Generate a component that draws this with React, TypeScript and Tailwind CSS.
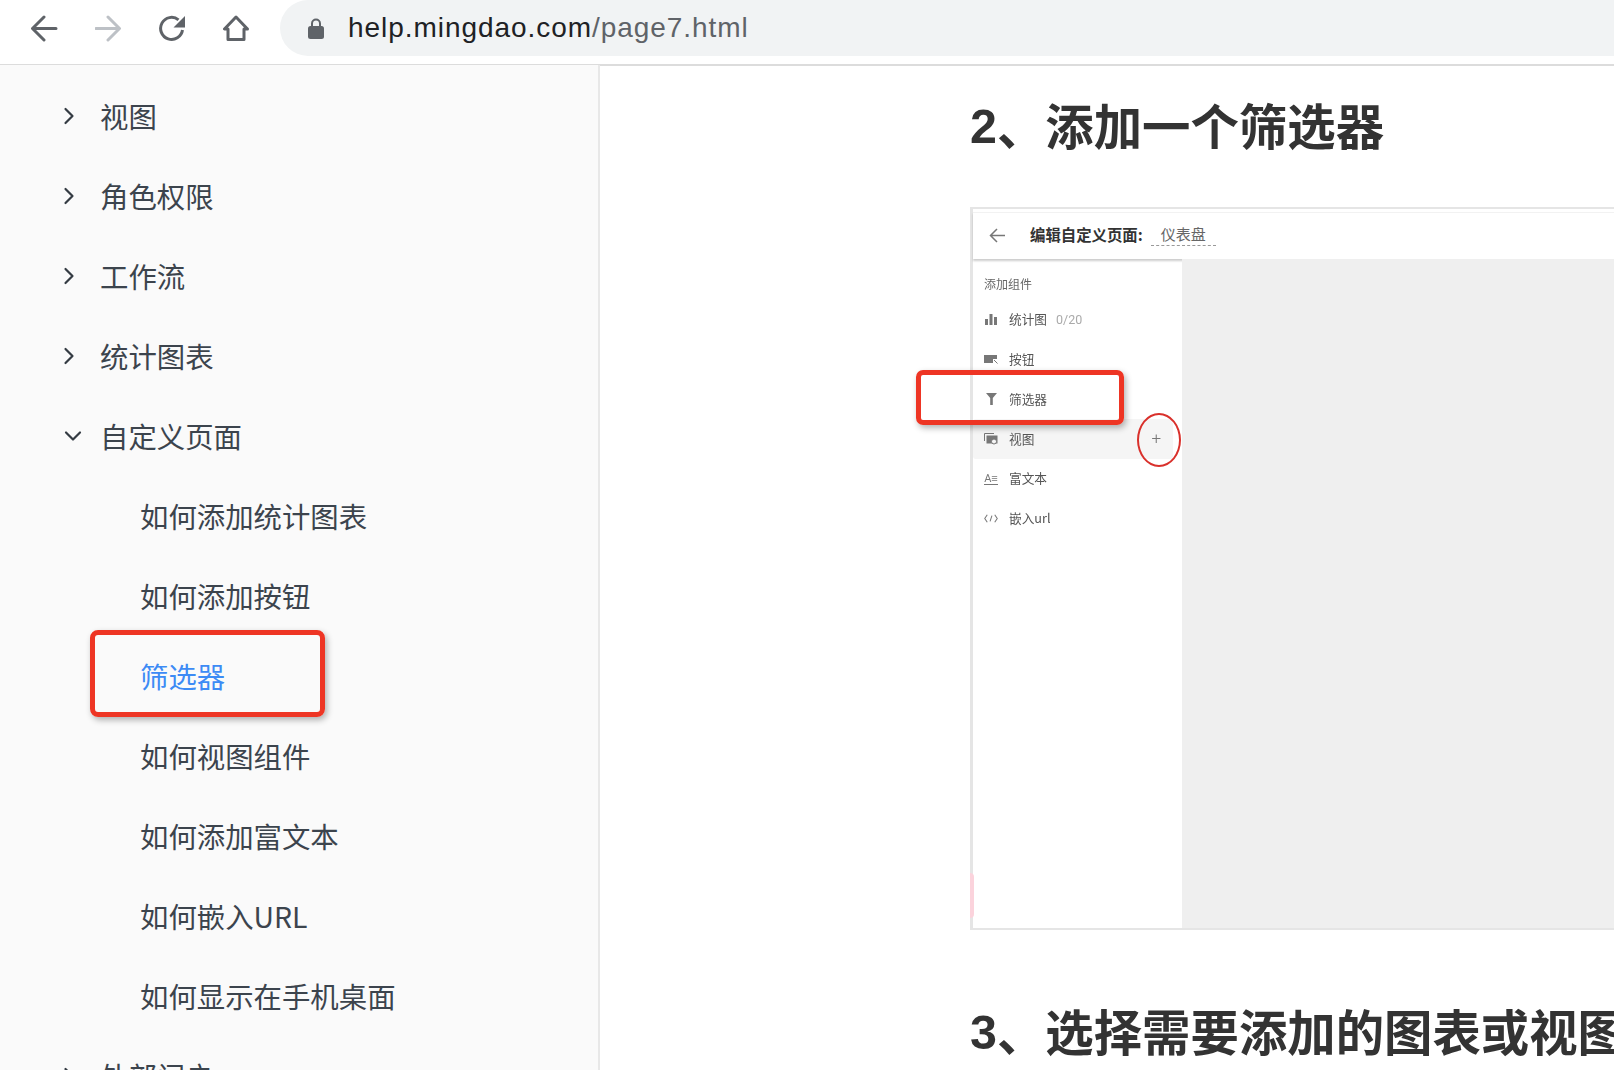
import React from "react";

const CJK = "font-['Noto_Sans_CJK_SC','Noto_Sans',sans-serif]";

function ChevronRight() {
  return (
    <svg width="12" height="18" viewBox="0 0 12 18" fill="none" stroke="#343b43" strokeWidth="2.2" strokeLinecap="round" strokeLinejoin="round">
      <path d="M2.5 2 L9.5 9 L2.5 16" />
    </svg>
  );
}

function ChevronDown() {
  return (
    <svg width="18" height="12" viewBox="0 0 18 12" fill="none" stroke="#343b43" strokeWidth="2.2" strokeLinecap="round" strokeLinejoin="round">
      <path d="M2 2.5 L9 9.5 L16 2.5" />
    </svg>
  );
}

function TopRow({ label, open }: { label: string; open?: boolean }) {
  return (
    <div className="flex h-[80px] shrink-0 items-center">
      <div className="flex w-[100px] justify-start pl-[63px]">{open ? <span className="pl-[1px]"><ChevronDown /></span> : <ChevronRight />}</div>
      <span className="text-[28.4px] leading-none text-[#3c444d]">{label}</span>
    </div>
  );
}

function SubRow({ label, active }: { label: string; active?: boolean }) {
  return (
    <div className={`flex h-[80px] shrink-0 items-center pl-[140px] text-[28.4px] leading-none ${active ? "text-[#3d8bf5]" : "text-[#3c444d]"}`}>
      {label}
    </div>
  );
}

function Row({ icon, label, extra, hover }: { icon: React.ReactNode; label: string; extra?: string; hover?: boolean }) {
  return (
    <div className={`flex h-[39.7px] w-[200px] items-center rounded-[3px] pl-[11px] ${hover ? "bg-[#f5f5f5]" : ""}`}>
      <span className="flex w-[14px] justify-center">{icon}</span>
      <span className="ml-[11px] text-[12.7px] leading-none text-[#555]">{label}</span>
      {extra && <span className="ml-[9px] font-['Roboto',sans-serif] text-[12.5px] leading-none text-[#aaa]">{extra}</span>}
      {hover && <span className="ml-auto mr-[12px] font-['Roboto',sans-serif] text-[17px] font-light leading-none text-[#777]">+</span>}
    </div>
  );
}

export default function App() {
  return (
    <div className={`flex h-[1070px] w-[1614px] flex-col overflow-hidden bg-white ${CJK}`}>
      <header className="flex h-[66px] shrink-0 items-start border-b-2 border-[#dcdcdc] bg-white pl-[31px]">
        <div className="flex h-[56px] items-center gap-[37px]">
          <svg width="27" height="27" viewBox="0 0 27 27" fill="none" stroke="#5f6368" strokeWidth="3" strokeLinecap="round" strokeLinejoin="round">
            <path d="M25 13.5 H2 M13 2 L1.5 13.5 L13 25" />
          </svg>
          <svg width="27" height="27" viewBox="0 0 27 27" fill="none" stroke="#bdc1c6" strokeWidth="3" strokeLinecap="round" strokeLinejoin="round">
            <path d="M1 13.5 H24 M13 2 L24.5 13.5 L13 25" />
          </svg>
          <svg width="27" height="27" viewBox="0 0 27 27" fill="none">
            <path d="M24 15 A11 11 0 1 1 20 4.8" stroke="#5f6368" strokeWidth="3" transform="translate(-0.5 0)" />
            <path d="M26 1 V12.5 H14.5 Z" fill="#5f6368" />
          </svg>
          <svg width="27" height="27" viewBox="0 0 27 27" fill="none" stroke="#5f6368" strokeWidth="3" strokeLinejoin="round" strokeLinecap="round">
            <path d="M13 2 L1.5 14 H5 V24.5 H21 V14 H24.5 Z" />
          </svg>
        </div>
        <div className="ml-[30px] flex h-[56px] flex-1 items-center rounded-l-[28px] bg-[#f1f3f4] pl-[28px]">
          <svg width="16" height="22" viewBox="0 0 16 22" fill="none">
            <path d="M4 10 V6.5 A4 4 0 0 1 12 6.5 V10" stroke="#5f6368" strokeWidth="2" />
            <rect x="0" y="9" width="16" height="13" rx="2.5" fill="#5f6368" />
          </svg>
          <span className="ml-[24px] whitespace-nowrap font-['Liberation_Sans',sans-serif] text-[28px] leading-none tracking-[0.95px] text-[#202124]">
            help.mingdao.com<span className="text-[#5f6368]">/page7.html</span>
          </span>
        </div>
      </header>

      <main className="flex min-h-0 flex-1">
        <aside className="relative -mt-[1px] flex h-[1005px] w-[600px] shrink-0 flex-col overflow-hidden border-r-2 border-[#e8e8e8] bg-[#fafafa] pt-[11px]">
          <TopRow label="视图" />
          <TopRow label="角色权限" />
          <TopRow label="工作流" />
          <TopRow label="统计图表" />
          <TopRow label="自定义页面" open />
          <SubRow label="如何添加统计图表" />
          <SubRow label="如何添加按钮" />
          <SubRow label="筛选器" active />
          <SubRow label="如何视图组件" />
          <SubRow label="如何添加富文本" />
          <SubRow label="如何嵌入URL" />
          <SubRow label="如何显示在手机桌面" />
          <TopRow label="外部门户" />
          <div className="absolute left-[90px] top-[565px] h-[87px] w-[235px] rounded-[8px] border-[5px] border-[#ee3524] shadow-[2px_3px_6px_rgba(0,0,0,0.3)]" />
        </aside>

        <section className="flex min-w-0 flex-1 flex-col overflow-hidden pl-[370px]">
          <h2 className="flex h-[116px] shrink-0 items-center whitespace-nowrap text-[48.4px] font-semibold leading-none text-[#333]">
            <span className="inline-block translate-y-[2px] font-['Liberation_Sans',sans-serif] font-bold">2</span>、添加一个筛选器
          </h2>
          <div className="relative mt-[25px] flex h-[723px] w-[700px] shrink-0 flex-col border-b-2 border-l-[3px] border-t-2 border-[#e5e5e5] bg-white">
            <div className="mt-[3px] flex h-[47px] shrink-0 items-center border-t border-[#f2f2f2] pb-[2px] shadow-[0_2px_2px_rgba(0,0,0,0.2)]">
              <svg className="ml-[16px]" width="17" height="15" viewBox="0 0 17 15" fill="none" stroke="#777" strokeWidth="1.5">
                <path d="M16 7.5 H1.5 M8 1 L1.5 7.5 L8 14" />
              </svg>
              <span className="ml-[24px] text-[15.4px] font-bold leading-none text-[#333]">编辑自定义页面:</span>
              <span className="ml-[8px] border-b border-dashed border-[#999] px-[10px] pb-[2px] text-[15px] leading-[18px] text-[#666]">仪表盘</span>
            </div>
            <div className="flex min-h-0 flex-1">
              <div className="flex w-[209px] shrink-0 flex-col blur-[0.3px]">
                <div className="flex h-[41px] shrink-0 items-center pl-[11px] pt-[8px] text-[12px] leading-none text-[#666]">添加组件</div>
                <Row
                  label="统计图"
                  extra="0/20"
                  icon={
                    <svg width="12" height="11" viewBox="0 0 12 11" fill="#777">
                      <rect x="0" y="5" width="3" height="6" />
                      <rect x="4.5" y="0" width="3" height="11" />
                      <rect x="9" y="3" width="3" height="8" />
                    </svg>
                  }
                />
                <Row
                  label="按钮"
                  icon={
                    <svg width="14" height="10" viewBox="0 0 14 10" fill="#777">
                      <path d="M0 0 H13 V4 H9 V8 H0 Z" />
                      <path d="M10 5 L13.5 8.5" stroke="#777" strokeWidth="1" />
                    </svg>
                  }
                />
                <Row
                  label="筛选器"
                  icon={
                    <svg width="11" height="12" viewBox="0 0 11 12" fill="#777">
                      <path d="M0 0 H11 L6.8 5 V12 H4.2 V5 Z" />
                    </svg>
                  }
                />
                <Row
                  hover
                  label="视图"
                  icon={
                    <svg width="14" height="12" viewBox="0 0 14 12" fill="none" stroke="#777">
                      <path d="M0.5 8 V0.5 H10" strokeWidth="1" />
                      <rect x="2.5" y="2.5" width="11" height="8" fill="#777" stroke="none" />
                      <circle cx="10" cy="8.5" r="2.5" fill="#f5f5f5" stroke="#777" />
                    </svg>
                  }
                />
                <Row
                  label="富文本"
                  icon={<span className="border-b border-[#777] font-['Roboto',sans-serif] text-[11px] leading-[11px] text-[#777]">A≡</span>}
                />
                <Row
                  label="嵌入url"
                  icon={
                    <svg width="15" height="9" viewBox="0 0 15 9" fill="none" stroke="#777" strokeWidth="1.1">
                      <path d="M3.5 0.5 L0.8 4.5 L3.5 8.5 M11.5 0.5 L14.2 4.5 L11.5 8.5 M8.5 1.5 L6.5 7.5" />
                    </svg>
                  }
                />
              </div>
              <div className="flex-1 bg-[#efefef]" />
            </div>
            <div className="absolute -left-[3px] top-[664px] h-[45px] w-[4px] rounded-r-full bg-[#fbd3dc]" />
            <div className="absolute -left-[57px] top-[161px] h-[55px] w-[208px] rounded-[7px] border-[5px] border-[#ee3524] shadow-[2px_3px_6px_rgba(0,0,0,0.3)]" />
            <div className="absolute left-[164px] top-[204px] h-[54px] w-[44px] rounded-[50%] border-[2.5px] border-[#d9302b]" />
          </div>
          <h2 className="mt-[60px] flex h-[80px] shrink-0 items-center whitespace-nowrap text-[48.4px] font-semibold leading-none text-[#333]">
            <span className="inline-block translate-y-[2px] font-['Liberation_Sans',sans-serif] font-bold">3</span>、选择需要添加的图表或视图组件
          </h2>
        </section>
      </main>
    </div>
  );
}
